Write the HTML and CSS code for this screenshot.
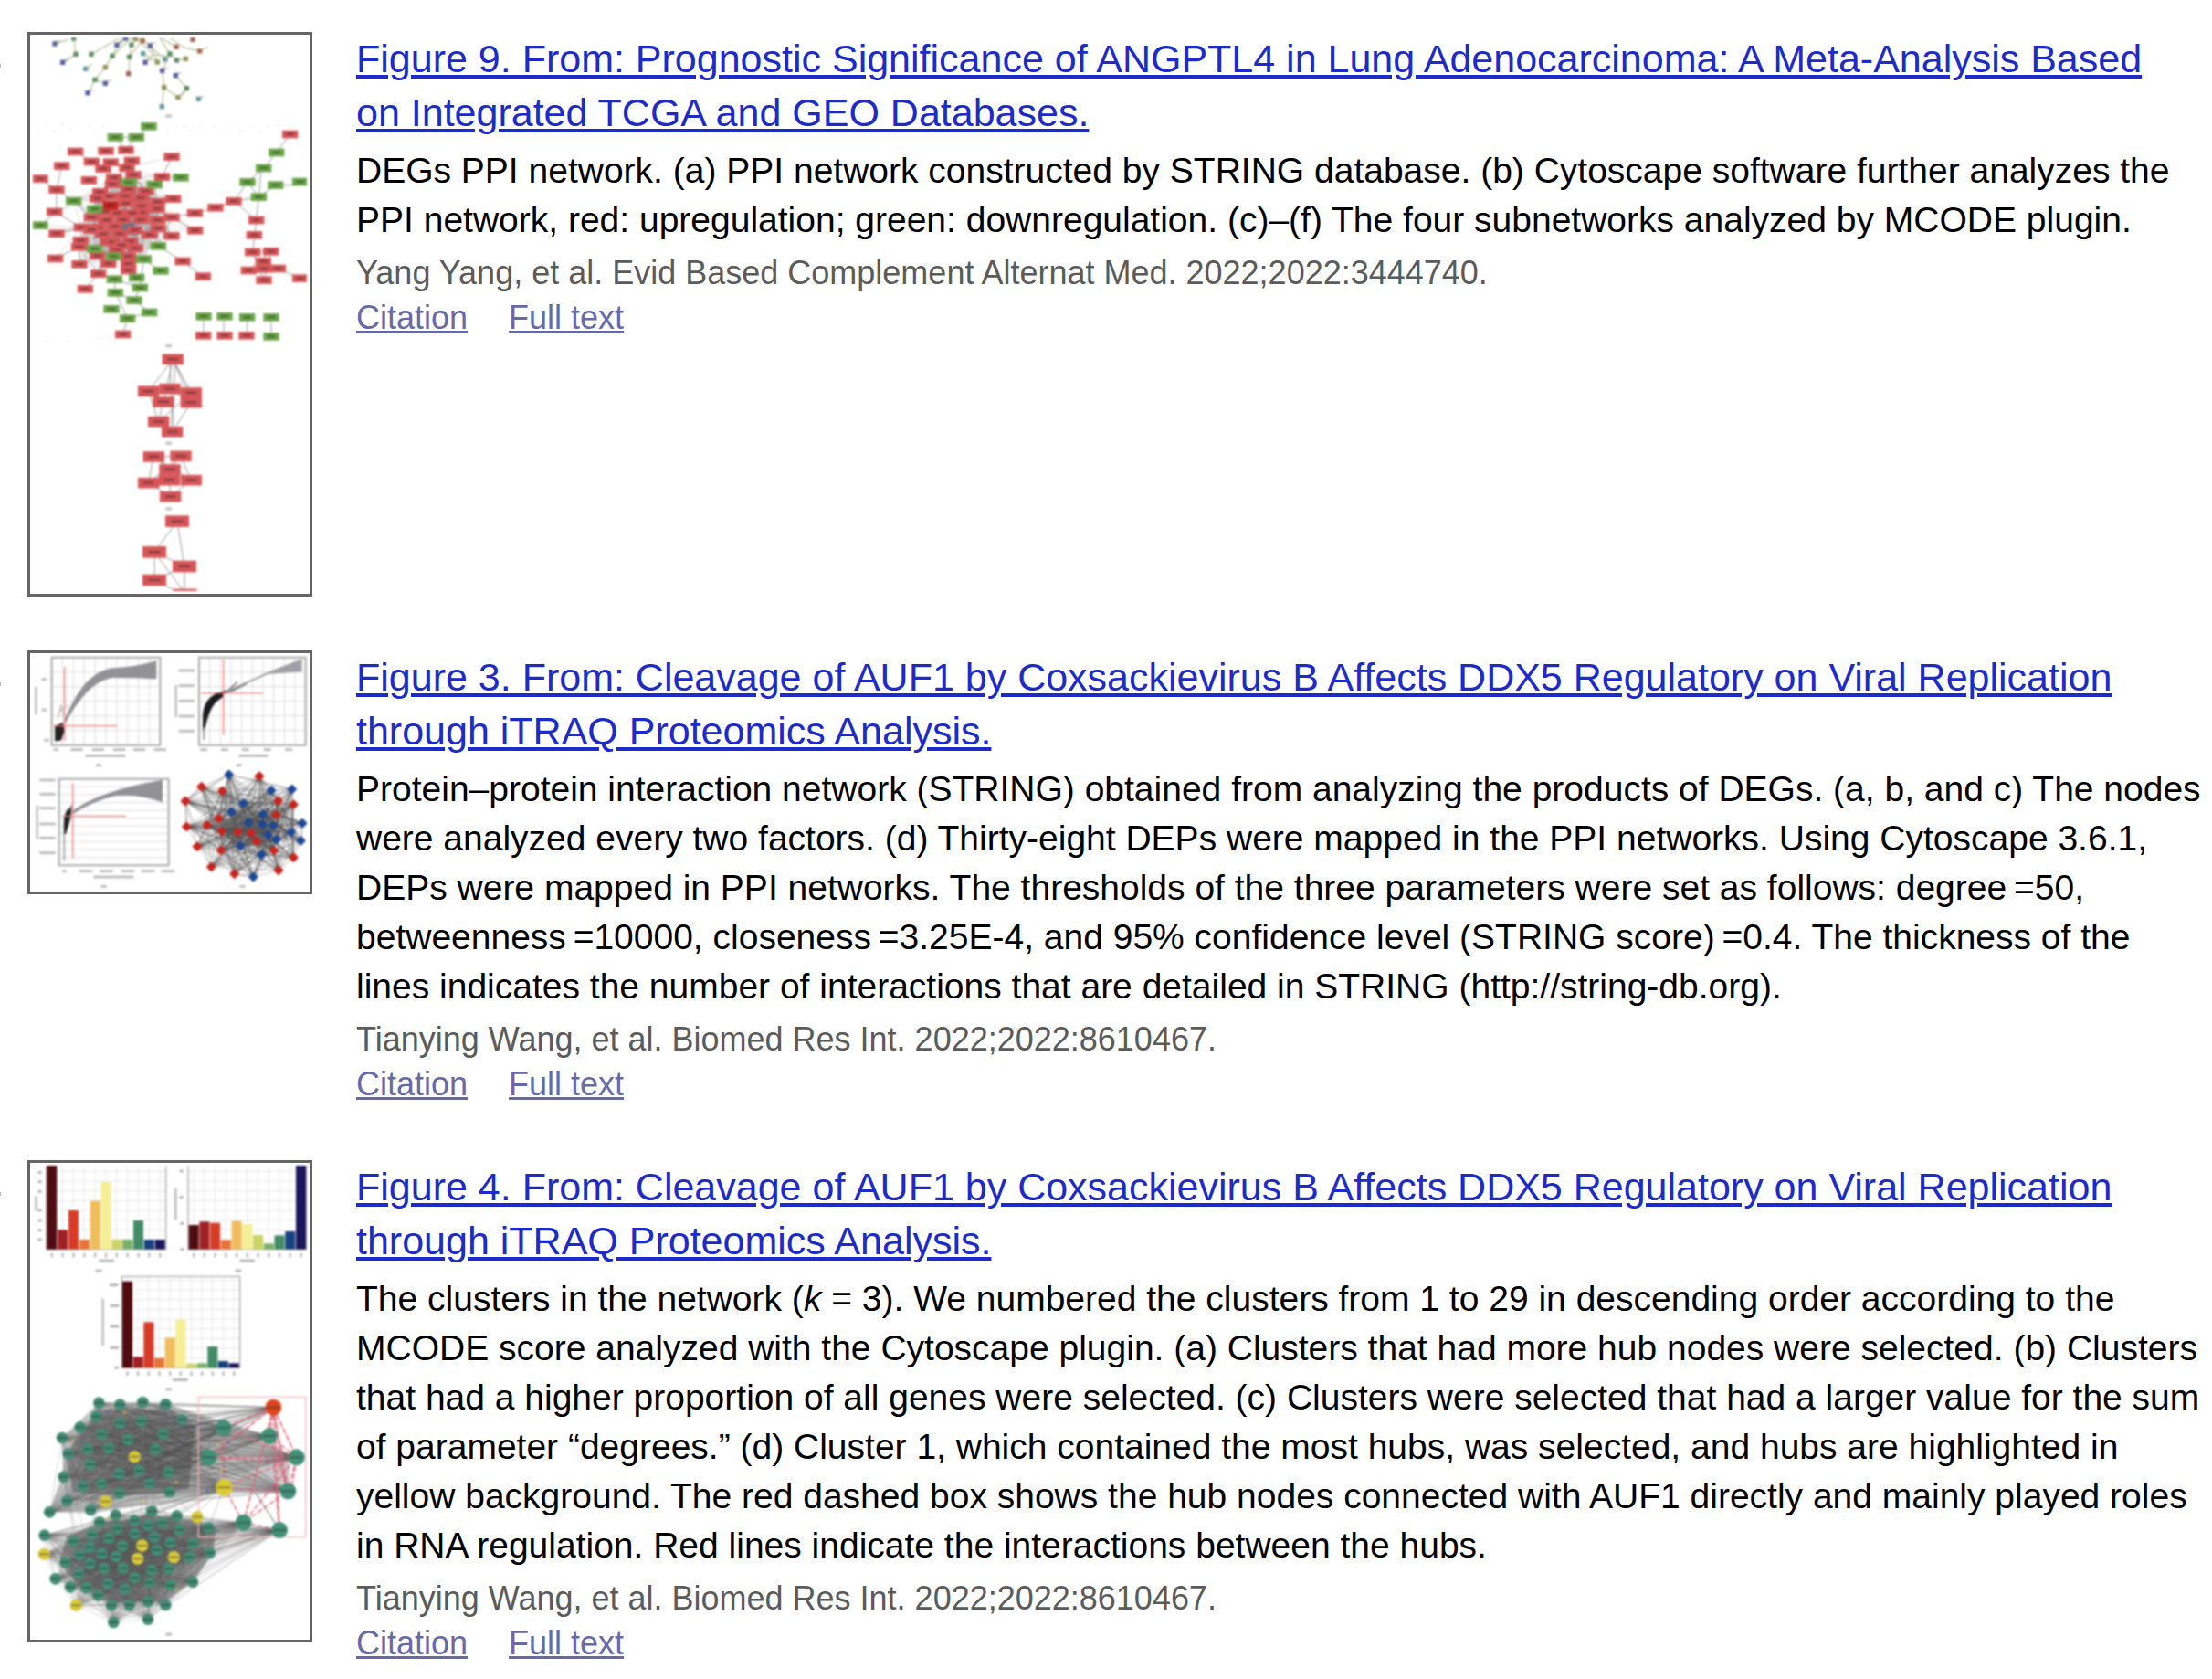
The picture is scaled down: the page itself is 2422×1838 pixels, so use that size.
FILE: index.html
```html
<!DOCTYPE html>
<html lang="en">
<head>
<meta charset="utf-8">
<title>Figure results</title>
<link rel="stylesheet" href="styles.css">
</head>
<body>
<main class="results">
  <article class="result">
    <span class="marker"></span>
    <div class="thumb"><svg id="ppi" class="art" viewBox="108 63 900 1818" role="img" aria-label="DEGs PPI network"></svg></div>
    <div class="details">
      <h2 class="title"><a href="#figure9">Figure 9. From: Prognostic Significance of ANGPTL4 in Lung Adenocarcinoma: A Meta-Analysis Based on Integrated TCGA and GEO Databases.</a></h2>
      <p class="caption">DEGs PPI network. (a) PPI network constructed by STRING database. (b) Cytoscape software further analyzes the PPI network, red: upregulation; green: downregulation. (c)–(f) The four subnetworks analyzed by MCODE plugin.</p>
      <p class="source">Yang Yang, et al. Evid Based Complement Alternat Med. 2022;2022:3444740.</p>
      <div class="links"><a href="#citation9">Citation</a><a href="#text9">Full text</a></div>
    </div>
  </article>

  <article class="result">
    <span class="marker"></span>
    <div class="thumb"><svg id="itraq" class="art" viewBox="108 54 900 765" role="img" aria-label="Protein interaction network"></svg></div>
    <div class="details">
      <h2 class="title"><a href="#figure3">Figure 3. From: Cleavage of AUF1 by Coxsackievirus B Affects DDX5 Regulatory on Viral Replication through iTRAQ Proteomics Analysis.</a></h2>
      <p class="caption">Protein–protein interaction network (STRING) obtained from analyzing the products of DEGs. (a, b, and c) The nodes were analyzed every two factors. (d) Thirty-eight DEPs were mapped in the PPI networks. Using Cytoscape 3.6.1, DEPs were mapped in PPI networks. The thresholds of the three parameters were set as follows: degree&#8201;=50, betweenness&#8201;=10000, closeness&#8201;=3.25E-4, and 95% confidence level (STRING score)&#8201;=0.4. The thickness of the lines indicates the number of interactions that are detailed in STRING (http://string-db.org).</p>
      <p class="source">Tianying Wang, et al. Biomed Res Int. 2022;2022:8610467.</p>
      <div class="links"><a href="#citation3">Citation</a><a href="#text3">Full text</a></div>
    </div>
  </article>

  <article class="result">
    <span class="marker"></span>
    <div class="thumb"><svg id="clusters" class="art" viewBox="108 48 900 1548" role="img" aria-label="Clusters in the network"></svg></div>
    <div class="details">
      <h2 class="title"><a href="#figure4">Figure 4. From: Cleavage of AUF1 by Coxsackievirus B Affects DDX5 Regulatory on Viral Replication through iTRAQ Proteomics Analysis.</a></h2>
      <p class="caption">The clusters in the network (<i>k</i> = 3). We numbered the clusters from 1 to 29 in descending order according to the MCODE score analyzed with the Cytoscape plugin. (a) Clusters that had more hub nodes were selected. (b) Clusters that had a higher proportion of all genes were selected. (c) Clusters were selected that had a larger value for the sum of parameter “degrees.” (d) Cluster 1, which contained the most hubs, was selected, and hubs are highlighted in yellow background. The red dashed box shows the hub nodes connected with AUF1 directly and mainly played roles in RNA regulation. Red lines indicate the interactions between the hubs.</p>
      <p class="source">Tianying Wang, et al. Biomed Res Int. 2022;2022:8610467.</p>
      <div class="links"><a href="#citation4">Citation</a><a href="#text4">Full text</a></div>
    </div>
  </article>
</main>
<script src="figures.js"></script>
</body>
</html>
```
FILE: styles.css
```css
* { box-sizing: border-box; }

body {
  margin: 0;
  background: #fff;
  color: #000;
  font-family: "Liberation Sans", Arial, Helvetica, sans-serif;
}

.results {
  display: flex;
  flex-direction: column;
  gap: 59px;
  padding: 35px 8px 15px 0;
}

.result {
  display: grid;
  grid-template-columns: 30px 312px minmax(0, 1fr);
  align-items: start;
}

.marker {
  width: 1px;
  height: 4px;
  margin-top: 35px;
  background: #bbb;
}

.thumb {
  padding: 3px;
  border: 3px solid #666;
}

.art {
  display: block;
  width: 100%;
  filter: blur(1px);
}

.details { padding-left: 48px; }

.title {
  margin: 0 0 7px;
  padding-right: 16px;
  font-size: 43px;
  font-weight: 400;
  line-height: 59px;
}

.title a {
  color: #1c2bc9;
  text-decoration-thickness: 4px;
  text-underline-offset: 3px;
}

.caption {
  margin: 0 0 6px;
  font-size: 39px;
  line-height: 54px;
}

.source {
  margin: 0;
  color: #5b5b5b;
  font-size: 36px;
  line-height: 49px;
}

.links {
  display: flex;
  gap: 45px;
  font-size: 36px;
  line-height: 49px;
}

.links a {
  color: #666aab;
  text-decoration-thickness: 3px;
  text-underline-offset: 2px;
}
```
FILE: figures.js
```js
const NS = "http://www.w3.org/2000/svg";

function add(svg, name, attrs) {
  const node = document.createElementNS(NS, name);
  for (const key in attrs) node.setAttribute(key, attrs[key]);
  svg.appendChild(node);
}

function pairs(list) {
  return list.trim().split(/\s+/).map(p => p.split(",").map(Number));
}

function line(svg, a, b, stroke, width, opacity) {
  add(svg, "path", { d: `M${a[0]} ${a[1]}L${b[0]} ${b[1]}`, stroke, "stroke-width": width, opacity: opacity || 1, fill: "none" });
}

function path(svg, d, stroke, width, fill) {
  add(svg, "path", { d, stroke, "stroke-width": width, fill: fill || "none" });
}

function rect(svg, x, y, w, h, fill, opacity) {
  add(svg, "rect", { x, y, width: w, height: h, fill, opacity: opacity || 1 });
}

function box(svg, p, fill, w, h) {
  rect(svg, p[0] - w / 2, p[1] - h / 2, w, h, fill);
  rect(svg, p[0] - w / 4, p[1] - 4, w / 2, 7, "#222", 0.45);
}

/* Figure 9: STRING network, Cytoscape network and four subnetworks */
(function () {
  const svg = document.getElementById("ppi");
  const red = "#d65558", green = "#6ba548";

  path(svg, "M249 118L206 145M249 118L242 64M180 84L225 70M300 118L390 66M290 245L312 202L346 161L369 124L400 66M312 202L348 214M282 166L302 150M422 182L426 127L432 87M384 88L412 66L470 75M493 90L517 144M466 66L540 135M525 64L558 117L580 138L610 133M558 117L533 172L539 227L532 290M577 188L613 230L585 260L539 227M613 230L598 255M652 265L670 255M656 108L682 95M656 108L604 96L560 66M579 94L530 66M477 145L500 120L560 125M369 124L430 66M470 116L517 144M425 127L470 70M450 66L500 115", "#bdc4a0", 4);
  const dots = pairs("180,84 206,145 384,88 493,90 477,145 533,172 577,188 288,245 346,214 412,66");
  dots.forEach(p => rect(svg, p[0] - 8, p[1] - 8, 16, 16, "#5860a0"));
  pairs("249,118 300,118 369,124 432,87 425,127 312,202 558,117 580,138 613,230 242,66").forEach(p => rect(svg, p[0] - 8, p[1] - 8, 16, 16, "#5e8d5f"));
  pairs("346,161 517,144 539,227 585,260 610,133 445,68").forEach(p => rect(svg, p[0] - 8, p[1] - 8, 16, 16, "#92945a"));
  pairs("470,116 542,135 532,290 652,265 281,166").forEach(p => rect(svg, p[0] - 8, p[1] - 8, 16, 16, "#6799a3"));
  pairs("422,182 468,74 633,70 579,94 656,108").forEach(p => rect(svg, p[0] - 8, p[1] - 8, 16, 16, "#a16752"));
  dots.forEach(p => rect(svg, p[0] + 3, p[1] - 10, 18, 4, "#444", 0.35));

  pairs("120,366 150,350 175,368 202,348 230,365 255,350 290,350 310,370 335,352 550,370 580,350 610,350 625,368 655,352 675,368 700,350 735,365 760,350 790,368 820,350 850,368 880,352 910,348 975,410 995,440 985,500 150,1056 220,1056 320,1048 355,1048 463,1048 563,1048").forEach(p => rect(svg, p[0], p[1], 5, 5, "#e4e4d6"));

  const reds = pairs("248,438 348,436 414,433 301,471 364,473 433,468 203,485 339,494 417,491 564,455 132,527 292,532 374,524 438,515 532,521 186,563 370,545 422,562 479,568 329,571 320,592 411,584 463,590 569,593 179,636 413,608 465,617 517,603 516,626 301,654 349,663 404,662 465,638 463,662 517,663 564,654 268,687 321,688 376,684 443,696 519,690 641,697 186,707 338,709 393,708 492,711 564,715 265,730 354,734 428,733 260,751 383,760 445,755 182,789 320,780 421,782 261,808 356,806 422,806 323,839 422,828 280,889 600,798 667,848 640,640 708,622 768,601 842,663 835,712 953,381 830,768 890,766 865,799 817,828 867,823 913,822 867,860 986,854 404,1038 668,1042 738,1042 810,1042 385,640 360,585 435,640 370,735 400,745 300,695 345,635");
  const greens = pairs("489,355 379,391 448,391 594,523 423,539 508,546 242,600 311,627 132,680 311,757 373,782 472,791 520,748 528,829 376,857 449,852 460,885 379,901 441,926 366,955 491,966 419,986 908,441 866,492 813,538 905,548 986,537 850,587 669,979 738,979 812,982 891,982 891,1045");
  const core = reds.slice(0, 61).concat(greens.slice(4, 13));
  core.forEach((a, i) => core.forEach((b, j) => {
    const d = Math.hypot(a[0] - b[0], a[1] - b[1]);
    const deep = Math.hypot(a[0] - 400, a[1] - 640) < 150;
    if (j > i && deep && d < 170) line(svg, a, b, "#666", 2, 0.35);
  }));
  path(svg, "M132 527L186 563L203 485M186 563V636L132 680M186 563L242 600L301 654M179 636L268 687L186 707M248 438L301 471M489 355L448 391H379L414 433L448 391M564 455L532 521L594 523M564 654L640 640L708 622L768 601L813 538L866 492L908 441L953 381M813 538L850 587L905 548H986M850 587L858 492M768 601L842 663L850 587M842 663L830 768L890 766L817 828L913 822L986 854M867 860L830 768M867 860L890 766M865 799L913 822M640 697L564 654M520 748L600 798L667 848M520 748L564 654M528 829L472 791L460 885L376 857L379 901L419 986L404 1038M379 901L441 926L491 966L419 986M441 926L460 885M182 789L260 751L323 839L280 889M261 808L260 751M669 979V1042M735 979V1042M812 982V1042M891 982V1045M768 601L850 587M508 546L479 568M323 839L354 734", "#999", 3);
  rect(svg, 398, 670, 45, 40, "#5c788a");
  reds.forEach(p => box(svg, p, red, 52, 26));
  greens.forEach(p => box(svg, p, green, 52, 26));
  box(svg, [363, 615], "#c3221f", 50, 28);

  path(svg, "M568 1120L488 1225L520 1325L566 1358L628 1262L568 1120L537 1260L520 1325M568 1120L628 1230L520 1325M558 1120L566 1358M575 1120L566 1358M558 1217L628 1262M488 1225H628M568 1120L628 1230M504 1440L488 1526L560 1570L628 1517L594 1438L504 1440L558 1482L594 1438M504 1440L628 1517M594 1438L488 1526M558 1482V1570M582 1652L507 1753V1845L606 1800L582 1652M507 1753L606 1800V1885L507 1753M507 1845L606 1895", "#999", 3);
  pairs("568,1120 488,1225 558,1217 628,1230 537,1260 628,1262 521,1325 566,1358 505,1440 594,1438 558,1482 488,1526 556,1517 628,1517 560,1571").forEach(p => box(svg, p, red, 70, 35));
  pairs("582,1652 507,1753 606,1800 507,1845 608,1893").forEach(p => box(svg, p, red, 78, 38));
  pairs("554,322 554,1077 554,1397 554,1612").forEach(p => rect(svg, p[0] - 10, p[1] - 6, 20, 10, "#aaa", 0.7));
})();

/* Figure 3: three threshold scatter plots and the protein network */
(function () {
  const svg = document.getElementById("itraq");

  function frame(x, y, w, h, cols, rows) {
    for (let i = 1; i < cols; i++) line(svg, [x + w * i / cols, y], [x + w * i / cols, y + h], "#ddd", 3);
    for (let i = 1; i < rows; i++) line(svg, [x, y + h * i / rows], [x + w, y + h * i / rows], "#ddd", 3);
    path(svg, `M${x} ${y}H${x + w}V${y + h}H${x}Z`, "#aaa", 6);
  }
  function labels(list, w) {
    pairs(list).forEach(p => rect(svg, p[0] - w / 2, p[1] - 4, w, 8, "#888", 0.6));
  }

  frame(170, 59, 356, 288, 10, 6);
  path(svg, "M208 275C240 190 290 105 370 94Q450 90 514 70V130Q430 125 370 126C310 135 260 190 212 280Z", "none", 0, "#929296");
  path(svg, "M182 285L205 275L210 300L200 330L182 333Z", "#222", 3, "#222");
  path(svg, "M190 260L200 215L208 250M190 240L225 215", "#aaa", 3);
  path(svg, "M212 90V333M176 284H386", "#ee7777", 4);
  labels("252,362 322,362 392,362 458,362 526,362", 40);
  labels("184,362 145,131 145,231 153,331", 16);
  labels("346,382", 132);
  labels("324,413 785,413 341,811 796,811", 18);
  rect(svg, 114, 155, 8, 92, "#999", 0.6);

  frame(654, 59, 350, 288, 10, 6);
  path(svg, "M740 170L800 144L880 107L992 64V106L880 114L800 150L742 180Z", "none", 0, "#a0a0a4");
  path(svg, "M668 300V250C670 215 688 180 740 170L730 188C700 205 686 230 673 285Z", "#1c1c20", 4, "#1c1c20");
  path(svg, "M670 290V330", "#999", 6);
  path(svg, "M745 172L780 140M760 170L810 145", "#777", 5);
  path(svg, "M734 66V314M660 176H864", "#ee7777", 4);
  labels("613,102 613,152 613,202 613,252 613,301", 52);
  labels("669,362 738,362 806,362 878,362 948,362", 24);
  labels("832,382", 96);
  rect(svg, 574, 150, 8, 105, "#999", 0.6);

  frame(194, 458, 360, 284, 1, 11);
  path(svg, "M235 565Q330 495 534 461V535Q450 505 380 514Q300 532 238 575Z", "none", 0, "#929296");
  path(svg, "M211 640V600Q213 560 234 550L230 590L216 635Z", "#222", 3, "#222");
  path(svg, "M211 640V725M225 560L240 540", "#888", 4);
  path(svg, "M239 472V718M204 580H414", "#ee7777", 4);
  labels("156,462 156,508 156,554 156,606 156,652 156,701", 52);
  labels("282,761 349,761 420,761 486,761 552,761", 44);
  labels("211,761", 14);
  labels("373,780", 132);
  rect(svg, 118, 545, 8, 110, "#999", 0.6);

  const red = pairs("852,449 662,484 730,498 609,531 914,530 964,542 907,576 718,588 680,610 613,615 728,630 781,632 825,637 843,663 648,680 726,692 900,693 964,716 694,747 770,770 915,758");
  const blue = pairs("752,444 891,496 959,492 799,539 760,566 864,574 816,601 863,607 898,612 993,604 956,634 880,642 908,657 988,661 790,678 859,707 832,780");
  const all = red.concat(blue);
  all.forEach((a, i) => all.forEach((b, j) => {
    if (j > i && (i * 7 + j * 5) % 9 < 5) line(svg, a, b, "#444", (i + j) % 4 ? 2 : 4, 0.5);
  }));
  add(svg, "ellipse", { cx: 820, cy: 620, rx: 85, ry: 60, fill: "#555", opacity: 0.5 });
  function marks(list, fill) {
    list.forEach(p => {
      add(svg, "circle", { cx: p[0], cy: p[1], r: 12, fill });
      path(svg, `M${p[0] - 15} ${p[1]}h30M${p[0]} ${p[1] - 15}v30`, fill, 8);
    });
  }
  marks(red, "#c8241e");
  marks(blue, "#1f4796");
})();

/* Figure 4: three bar charts and the hub network */
(function () {
  const svg = document.getElementById("clusters");
  const colors = ["#500b11", "#a02024", "#d83c28", "#e8743a", "#f0bd5c", "#f5ee94", "#cbd565", "#7bb069", "#438b66", "#17417f", "#1c165c"];

  function chart(x, top, right, base, step, tops) {
    for (let i = 0; i < 11; i++) line(svg, [x + 18 + step * i, top], [x + 18 + step * i, base], "#e8e8e8", 3);
    for (let y = base - 32; y > top; y -= 32) line(svg, [x, y], [right, y], "#e8e8e8", 3);
    path(svg, `M${x} ${top}H${right}V${base}H${x}Z`, "#aaa", 4);
    tops.forEach((t, i) => {
      rect(svg, x + 2 + step * i, t, 33, base - t, colors[i]);
      rect(svg, x + 15 + step * i, base + 12, 7, 14, "#999", 0.7);
    });
  }
  chart(152, 40, 545, 323, 35.5, [40, 259, 195, 291, 164, 102, 291, 291, 228, 291, 291]);
  chart(618, 40, 1006, 323, 35.2, [243, 232, 236, 292, 230, 240, 276, 304, 277, 264, 40]);
  chart(400, 412, 788, 712, 35, [428, 676, 562, 680, 613, 554, 698, 697, 642, 690, 697]);
  pairs("131,70 131,101 131,133 131,195 131,228 131,260 131,291 598,323 598,238 596,152 596,66 383,712").forEach(p => rect(svg, p[0] - 6, p[1] - 4, 12, 8, "#888", 0.7));
  pairs("374,440 376,508 376,576 376,646").forEach(p => rect(svg, p[0] - 14, p[1] - 4, 28, 8, "#888", 0.7));
  pairs("350,361 812,361 592,752").forEach(p => rect(svg, p[0] - 25, p[1] - 5, 50, 9, "#888", 0.6));
  pairs("324,394 783,394 554,783 554,1588").forEach(p => rect(svg, p[0] - 10, p[1] - 5, 20, 9, "#888", 0.6));
  rect(svg, 114, 148, 10, 50, "#999", 0.5);
  rect(svg, 572, 122, 9, 104, "#999", 0.6);
  rect(svg, 334, 485, 8, 155, "#999", 0.6);

  const upper = pairs("325,827 394,833 469,825 544,832 316,872 394,893 465,888 598,882 263,907 334,931 421,948 536,929 204,942 288,979 358,976 511,979 224,994 296,1029 456,1050 392,1060 554,1055 209,1070 272,1101 334,1093 492,1092 392,1124 557,1120 220,1149 163,1186 298,1179");
  const lower = pairs("380,1196 442,1214 499,1183 581,1199 327,1219 385,1240 487,1229 533,1221 589,1244 685,1237 146,1262 302,1260 242,1282 358,1271 442,1257 507,1268 560,1287 634,1289 295,1301 402,1297 516,1311 262,1326 334,1323 382,1332 621,1334 689,1320 214,1351 296,1355 342,1371 404,1370 498,1376 554,1372 259,1389 182,1405 443,1402 355,1420 492,1417 633,1415 231,1432 284,1434 411,1438 559,1426 322,1459 366,1492 425,1491 486,1480 544,1491 373,1548 486,1538");
  const right = pairs("734,909 885,936 685,1006 974,1006 946,1117 800,1220 918,1245");
  const yellow = pairs("442,1004 347,1151 648,1202 467,1296 452,1339 571,1334 145,1324 250,1492");
  const hub = [898, 842], hubYellow = [736, 1105];

  path(svg, "M325 827L544 832L734 890L880 936L950 1000V1115L736 1120L560 1150L300 1190L163 1186L209 1070L204 942Z", "none", 0, "#77777766");
  path(svg, "M310 1225L500 1195L640 1210L710 1240L700 1320L633 1415L544 1480L366 1485L260 1430L195 1350L220 1265Z", "none", 0, "#66666699");
  path(svg, "M325 850L560 850L640 900L620 1110L400 1135L240 1120L215 1000Z", "none", 0, "#66666699");
  upper.forEach((a, i) => {
    upper.forEach((b, j) => { if (j > i) line(svg, a, b, "#555", 2, 0.35); });
    right.slice(0, 5).concat([hub, hubYellow]).forEach(b => line(svg, a, b, "#444", 2, 0.45));
  });
  lower.forEach((a, i) => {
    lower.forEach((b, j) => { if (j > i) line(svg, a, b, "#555", 2, 0.35); });
    line(svg, a, right[5], "#444", 2, 0.35);
    line(svg, a, right[6], "#444", 2, 0.35);
    if (i % 3 === 0) line(svg, a, upper[i % 30], "#777", 2, 0.4);
  });
  yellow.slice(6).forEach(a => lower.forEach(b => line(svg, a, b, "#555", 2, 0.35)));
  lower.slice(0, 12).forEach(a => line(svg, a, hubYellow, "#555", 2, 0.5));
  line(svg, [800, 1060], right[6], "#999", 4);

  path(svg, "M652 808H1004V1268H652Z", "#f2b5bd", 4);
  right.forEach(b => add(svg, "path", { d: `M898 842L${b[0]} ${b[1]}`, stroke: "#dd6b80", "stroke-width": 5, "stroke-dasharray": "20 5", fill: "none" }));
  add(svg, "path", { d: "M885 936L974 1006L946 1117L898 842M734 909L736 1105L800 1220L974 1006L736 1105L946 1117L800 1220L918 1245L898 1020L685 1006H974M915 1000L946 1117L885 936M734 909L974 1006L960 1100", stroke: "#d9637a", "stroke-width": 4, "stroke-dasharray": "18 6", fill: "none" });

  function disc(p, r, fill) {
    add(svg, "circle", { cx: p[0], cy: p[1], r, fill });
    rect(svg, p[0] - r * 0.8, p[1] - 3, r * 1.6, 6, "#222", 0.4);
  }
  pairs("355,860 410,862 545,862 240,952 610,951 715,961 750,957 580,1088 681,1115 473,1150 715,1248 358,1204 878,1023 579,1440 653,898 728,1050").forEach((p, i) => rect(svg, p[0] - 4, p[1] - 4, 7, 7, i % 2 ? "#d6b936" : "#5360b3"));
  upper.concat(lower).forEach(p => disc(p, 19, "#438c75"));
  right.forEach(p => disc(p, 27, "#438f77"));
  yellow.forEach(p => disc(p, 20, "#d9ca3a"));
  disc(hubYellow, 28, "#dcca35");
  disc(hub, 27, "#dc471e");
})();
```
